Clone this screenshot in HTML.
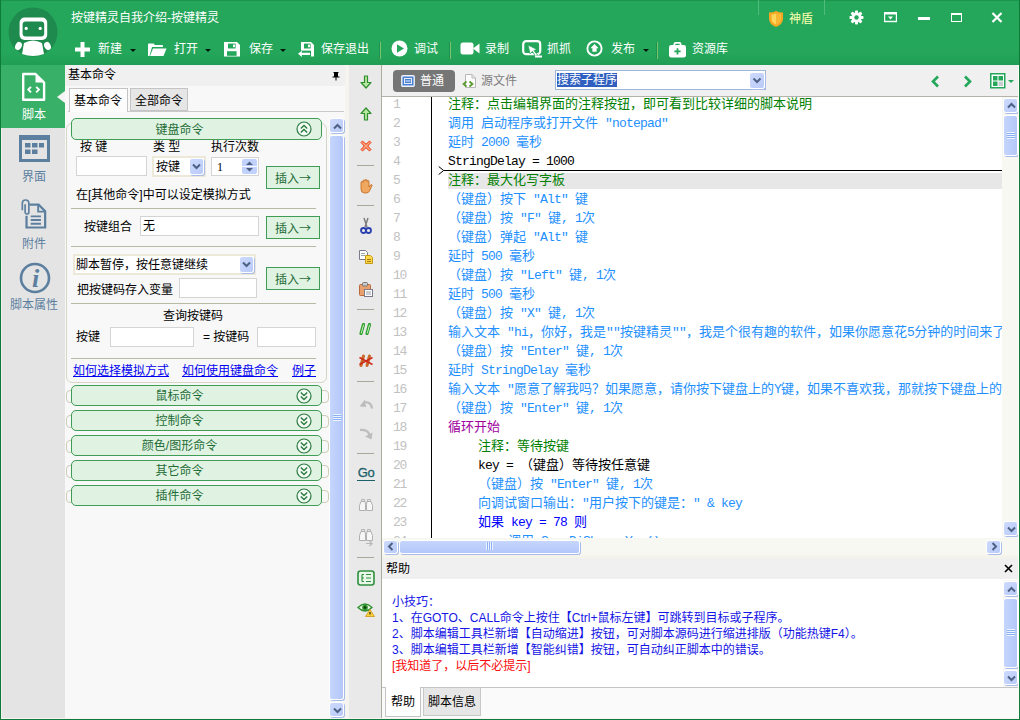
<!DOCTYPE html>
<html lang="zh-CN">
<head>
<meta charset="utf-8">
<title>按键精灵自我介绍-按键精灵</title>
<style>
*{box-sizing:border-box;margin:0;padding:0}
html,body{width:1020px;height:720px;overflow:hidden}
body{position:relative;background:#f8f8f8;font-family:"Liberation Sans","Noto Sans CJK SC",sans-serif;font-size:12px;color:#000;line-height:1}
.a{position:absolute}
i{font-style:normal}
/* header */
#hdr{left:0;top:0;width:1020px;height:65px;background:linear-gradient(#1c9450 0,#1c9450 1px,#24a75b 1px,#24a75b 52px,#209d54 65px)}
#hdr .t{color:#fff;font-size:12px;white-space:nowrap;line-height:16px}
#hdr .tb{top:41px;height:16px;color:#fff;font-size:12px;line-height:16px;white-space:nowrap}
#hdr .dd{width:0;height:0;border-left:3px solid transparent;border-right:3px solid transparent;border-top:3px solid #06180d;top:49px}
#hdr .sep{top:42px;width:1px;height:17px;background:#79c56e;box-shadow:-1px 0 0 #1f9150}
/* sidebar */
#side{left:0;top:65px;width:65px;height:653px;background:#e4e4e4}
#side .act{left:0;top:0;width:65px;height:63px;background:#38b068}
#side .lb{width:66px;text-align:center;font-size:12px;line-height:14px;color:#5c7fa0;left:1px}
/* command panel */
#cmd{left:65px;top:65px;width:284px;height:653px;background:#f8f8f8;z-index:0}
.gh{left:6px;width:251px;height:21px;border:1px solid #3f9c55;border-radius:5px;background:#e0f3e3;color:#1e6b35;text-align:center;line-height:20px;font-size:12px}
.gh span{position:absolute;left:0;width:215px;text-align:center}
.gh:before{content:"";position:absolute;left:-6px;top:4px;width:261px;height:11px;border:1px solid #cdcdb8;border-radius:4px;z-index:-1}
.gh.k:before{display:none}
.inp{background:#fff;border:1px solid #d4d4d4}
.btn{white-space:nowrap;border:1px solid #3f9c55;background:#e0f3e3;color:#1e6b35;text-align:center;font-size:12px;width:54px;height:23px;line-height:21px}
.hr{left:6px;width:245px;height:1px;background:#b9b9a6}
.lbl{white-space:nowrap;line-height:14px;font-size:12px}
.lnk{color:#0000f0;text-decoration:underline;white-space:nowrap;line-height:14px}
/* xp scrollbar */
.sbv{width:16px;background:#f8f8f3}
.sbb{width:15px;height:15px;background:linear-gradient(135deg,#cddafd,#b9caf8);border:1px solid #fff;border-radius:3px;box-shadow:1px 1px 0 #a9bbea}
.thumb{background:linear-gradient(90deg,#c5d5fd,#b4c7f9);border:1px solid #fff;border-radius:3px;box-shadow:1px 1px 0 #a9bbea}
.thumb.h{background:linear-gradient(#c5d5fd,#b4c7f9)}
/* vtoolbar */
#vtb{left:349px;top:65px;width:32px;height:653px;background:#e9e9e9}
#vtb .s{left:8px;width:17px;height:1px;background:#a8a89a}
/* editor */
#ed{left:382px;top:65px;width:636px;height:653px;background:#fff}
#edtop{left:0;top:0;width:636px;height:32px;background:#f0f0f0;border-bottom:1px solid #b4b3a9}
.ln{position:absolute;left:11px;height:19px;line-height:15px;font-family:"Liberation Mono",monospace;font-size:13px;letter-spacing:-1.3px;color:#c2c2c2}
.cl{position:absolute;height:19px;line-height:15px;white-space:nowrap;font-size:13px;font-family:"Liberation Mono","Noto Sans CJK SC",monospace}
.cl i{font-size:13px;letter-spacing:-0.8px}
.cg{color:#008000}.cb{color:#1e90ff}.ck{color:#000}.cp{color:#a000a0}.cd{color:#0000ff}
#help{font-size:12px;line-height:16px;color:#1414e6;white-space:nowrap}
</style>
</head>
<body>
<!-- ================= HEADER ================= -->
<div id="hdr" class="a">
  <svg class="a" style="left:8px;top:7px" width="50" height="50" viewBox="0 0 50 50">
    <circle cx="25" cy="25" r="24.5" fill="#1f8a4d"/>
    <rect x="11.6" y="10.6" width="27.6" height="22.4" rx="5" fill="#fff"/>
    <rect x="14.6" y="14.4" width="21.6" height="15.2" rx="3" fill="#1f8a4d"/>
    <circle cx="18.2" cy="21.4" r="1.6" fill="#fff"/><circle cx="32.2" cy="21.4" r="1.6" fill="#fff"/>
    <path d="M16 36 Q25 31 34 36 L36 47 Q25 51 14 47 Z" fill="#fff"/>
    <ellipse cx="10.5" cy="39" rx="3.2" ry="4.2" fill="#fff" transform="rotate(25 10.5 39)"/>
    <ellipse cx="39.5" cy="39" rx="3.2" ry="4.2" fill="#fff" transform="rotate(-25 39.5 39)"/>
  </svg>
  <div class="a t" style="left:71px;top:10px">按键精灵自我介绍-按键精灵</div>

  <!-- toolbar -->
  <svg class="a" style="left:74px;top:41px" width="17" height="17" viewBox="0 0 17 17"><path d="M6.5 1h4v5.5H16v4h-5.500V16h-4v-5.500H1v-4h5.500z" fill="#fff"/></svg>
  <div class="a tb" style="left:98px">新建</div><div class="a dd" style="left:130px"></div>
  <svg class="a" style="left:147px;top:42px" width="20" height="15" viewBox="0 0 20 15"><path d="M1 14V2.500Q1 1.500 2 1.500h4.500l1.500 1.500h7q1 0 1 1V5H5L2.500 14z" fill="#fff"/><path d="M6 6.500h13.500L16.500 14H3z" fill="#fff"/></svg>
  <div class="a tb" style="left:174px">打开</div><div class="a dd" style="left:205px"></div>
  <svg class="a" style="left:224px;top:41px" width="17" height="17" viewBox="0 0 17 17"><path d="M0 1h13l3 3v11.600H0z" fill="#fff"/><rect x="4" y="2.600" width="7.600" height="4.900" fill="#24a75b"/><rect x="9" y="3.600" width="2" height="2.600" fill="#fff"/><rect x="3" y="10.200" width="9.600" height="4.600" fill="#24a75b"/></svg>
  <div class="a tb" style="left:249px">保存</div><div class="a dd" style="left:280px"></div>
  <svg class="a" style="left:298px;top:41px" width="17" height="17" viewBox="0 0 17 17"><path d="M3 1h10l3 3v11.600H3z" fill="#fff"/><rect x="6" y="2.600" width="6.600" height="4.900" fill="#24a75b"/><rect x="10" y="3.600" width="2" height="2.600" fill="#fff"/><rect x="2" y="9.600" width="11" height="6.500" fill="#24a75b"/><path d="M0 12.800l3.800-3v2h8.200v2.200H3.800v2z" fill="#fff"/></svg>
  <div class="a tb" style="left:321px">保存退出</div>
  <div class="a sep" style="left:380px"></div>
  <svg class="a" style="left:391px;top:40px" width="17" height="17" viewBox="0 0 17 17"><circle cx="8.500" cy="8.500" r="8" fill="#fff"/><path d="M6 4.200L13 8.500 6 12.800z" fill="#24a75b"/></svg>
  <div class="a tb" style="left:414px">调试</div>
  <div class="a sep" style="left:450px"></div>
  <svg class="a" style="left:460px;top:42px" width="20" height="13" viewBox="0 0 20 13"><rect x="0.500" y="0.500" width="13" height="12" rx="2.500" fill="#fff"/><path d="M13 6.500L19.500 1.500v10z" fill="#fff"/></svg>
  <div class="a tb" style="left:485px">录制</div>
  <svg class="a" style="left:522px;top:40px" width="21" height="18" viewBox="0 0 21 18"><rect x="1.200" y="1.200" width="17" height="13" rx="3" fill="none" stroke="#fff" stroke-width="2.200"/><path d="M6 5l9 4.500-3 1 3.500 4.500-2 1.200-3-4.700-2.500 2.300z" fill="#fff" stroke="#24a75b" stroke-width="0.800"/><path d="M13 16.500h7" stroke="#fff" stroke-width="2"/></svg>
  <div class="a tb" style="left:547px">抓抓</div>
  <svg class="a" style="left:586px;top:40px" width="17" height="17" viewBox="0 0 17 17"><circle cx="8.5" cy="8.5" r="7.1" fill="none" stroke="#fff" stroke-width="1.9"/><path d="M8.5 4L12.600 8.200h-2v3.600H6.400V8.200h-2z" fill="#fff"/></svg>
  <div class="a tb" style="left:611px">发布</div><div class="a dd" style="left:643px"></div>
  <div class="a sep" style="left:657px"></div>
  <svg class="a" style="left:668px;top:41px" width="19" height="17" viewBox="0 0 20 19"><path d="M6.500 5V3.500q0-1.500 1.500-1.500h4q1.500 0 1.500 1.500V5" fill="none" stroke="#fff" stroke-width="2"/><rect x="0.500" y="4.500" width="19" height="14" rx="2.500" fill="#fff"/><path d="M9 8h2v2.500h2.500v2H11V15H9v-2.500H6.500v-2H9z" fill="#24a75b"/></svg>
  <div class="a tb" style="left:692px">资源库</div>

  <!-- window controls -->
  <div class="a" style="left:758px;top:0;width:1px;height:15px;background:#4fbb7c"></div>
  <div class="a" style="left:824px;top:0;width:1px;height:15px;background:#4fbb7c"></div>
  <svg class="a" style="left:768px;top:10px" width="16" height="18" viewBox="0 0 16 18"><path d="M8 1Q11 2.500 15 2.500V9q0 5-7 8-7-3-7-8V2.500Q5 2.500 8 1z" fill="#f5a623"/><path d="M8 3.500Q10 4.500 12.500 4.500V9q0 3.500-4.500 5.500Q3.500 12.500 3.500 9V4.500Q6 4.500 8 3.500z" fill="#ffd65c"/><path d="M8 3.500Q10 4.500 12.500 4.500V9q0 3.500-4.500 5.500z" fill="#f7b733"/></svg>
  <div class="a t" style="left:789px;top:11px;color:#ffffb0">神盾</div>
  <svg class="a" style="left:849px;top:10px" width="15" height="15" viewBox="0 0 15 15"><g fill="#fff"><circle cx="7.500" cy="7.500" r="5"/><g id="gt"><rect x="6" y="0.500" width="3" height="14" rx="0.800"/></g><rect x="6" y="0.500" width="3" height="14" rx="0.800" transform="rotate(45 7.500 7.500)"/><rect x="6" y="0.500" width="3" height="14" rx="0.800" transform="rotate(90 7.500 7.500)"/><rect x="6" y="0.500" width="3" height="14" rx="0.800" transform="rotate(135 7.500 7.500)"/></g><circle cx="7.500" cy="7.500" r="2.200" fill="#24a75b"/></svg>
  <svg class="a" style="left:884px;top:12px" width="13" height="11" viewBox="0 0 13 11"><rect x="0.500" y="0.500" width="12" height="9" fill="none" stroke="#fff" stroke-width="1.400"/><rect x="0.500" y="0.500" width="12" height="2" fill="#fff"/><path d="M4 4.500h5L6.500 7.500z" fill="#fff"/></svg>
  <div class="a" style="left:918px;top:17px;width:12px;height:3px;background:#fff"></div>
  <div class="a" style="left:951px;top:13px;width:11px;height:9px;border:1px solid #fff;border-top-width:2px"></div>
  <svg class="a" style="left:991px;top:12px" width="12" height="11" viewBox="0 0 12 11"><path d="M1.500 1l9 9M10.500 1l-9 9" stroke="#fff" stroke-width="2.200"/></svg>
</div>

<!-- ================= SIDEBAR ================= -->
<div id="side" class="a">
  <div class="a act"></div>
  <div class="a" style="left:57px;top:26px;width:0;height:0;border-top:6px solid transparent;border-bottom:6px solid transparent;border-right:8px solid #f4f4f4"></div>
  <svg class="a" style="left:21px;top:7px" width="26" height="30" viewBox="0 0 26 30"><path d="M2.2 2h12.300l8.600 8.600V27.800H2.200z" fill="none" stroke="#fff" stroke-width="2.400" stroke-linejoin="round"/><path d="M14.500 2v8.600h8.600z" fill="#fff"/><path d="M10 14.800L7.300 17.600l2.700 2.800M15.200 14.800l2.700 2.800-2.700 2.800" fill="none" stroke="#fff" stroke-width="1.900"/></svg>
  <div class="a lb" style="top:43px;color:#fff">脚本</div>

  <svg class="a" style="left:19px;top:70px" width="31" height="27" viewBox="0 0 31 27"><rect x="0" y="0" width="31" height="5" fill="#5c7fa0"/><rect x="1.500" y="1.500" width="28" height="24" fill="none" stroke="#5c7fa0" stroke-width="3"/><rect x="6" y="8" width="5.500" height="4.500" fill="#5c7fa0"/><rect x="13" y="8" width="5.500" height="4.500" fill="#5c7fa0"/><rect x="20" y="8" width="5" height="4.500" fill="#5c7fa0"/><rect x="6" y="14.500" width="5.500" height="4.500" fill="#5c7fa0"/><rect x="13" y="14.500" width="5.500" height="4.500" fill="#5c7fa0"/></svg>
  <div class="a lb" style="top:105px">界面</div>

  <svg class="a" style="left:20px;top:133px" width="27" height="32" viewBox="0 0 29 34"><path d="M10 7h10l7 7v17.500H7V19" fill="none" stroke="#5c7fa0" stroke-width="2.400"/><path d="M19.500 7v7.500H27" fill="none" stroke="#5c7fa0" stroke-width="2"/><path d="M11.500 19.500h11M11.500 23.500h11M11.500 27.500h11" stroke="#5c7fa0" stroke-width="2"/><path d="M2.500 13V5.500a3.500 3.500 0 0 1 7 0V15a2 2 0 0 1-4 0V6.500" fill="none" stroke="#5c7fa0" stroke-width="1.800"/></svg>
  <div class="a lb" style="top:172px">附件</div>

  <svg class="a" style="left:19px;top:197px" width="32" height="32" viewBox="0 0 32 32"><circle cx="16" cy="16" r="14" fill="none" stroke="#5c7fa0" stroke-width="2.600"/><text x="16.5" y="24.5" text-anchor="middle" font-family="Liberation Serif,serif" font-style="italic" font-weight="bold" font-size="26" fill="#5c7fa0">i</text></svg>
  <div class="a lb" style="top:233px">脚本属性</div>
</div>

<!-- ================= COMMAND PANEL ================= -->
<div id="cmd" class="a">
  <div class="a" style="left:0;top:0;width:282px;height:21px;background:#f0f0f0"></div>
  <div class="a lbl" style="left:3px;top:3px">基本命令</div>
  <svg class="a" style="left:267px;top:7px" width="8" height="9" viewBox="0 0 8 9"><path d="M1.500 0h5v1h-0.500v3.500h1.500v1H4.500V8.500h-1V5.500H0.500v-1H2V1H1.500z" fill="#000"/><rect x="4" y="1" width="1.500" height="3.500" fill="#000"/></svg>
  <!-- tabs -->
  <div class="a" style="left:3px;top:46px;width:276px;height:1px;background:#c9c9c9"></div>
  <div class="a" style="left:65px;top:23px;width:58px;height:23px;background:#e6e6e6;border:1px solid #c4c4c4"></div>
  <div class="a lbl" style="left:70px;top:29px">全部命令</div>
  <div class="a" style="left:4px;top:23px;width:59px;height:24px;background:#fcfcfc;border:1px solid #c4c4c4;border-bottom:none"></div>
  <div class="a lbl" style="left:9px;top:29px">基本命令</div>

  <!-- keyboard group box -->
  <div class="a" style="left:1px;top:58px;width:261px;height:260px;border:1px solid #d6d6c6;border-radius:6px;background:#f8f8f8"></div>
  <div class="a gh k" style="top:53px;height:22px;line-height:22px"><span>键盘命令</span>
    <svg class="a" style="left:224px;top:2px" width="16" height="16" viewBox="0 0 16 16"><circle cx="8" cy="8" r="7" fill="#f3fbf4" stroke="#2a7a3f" stroke-width="1.200"/><path d="M4.800 7.500L8 4.500l3.200 3M4.800 11.500L8 8.500l3.200 3" fill="none" stroke="#2a7a3f" stroke-width="1.400"/></svg>
  </div>
  <div class="a lbl" style="left:15px;top:75px">按 键</div>
  <div class="a lbl" style="left:88px;top:75px">类 型</div>
  <div class="a lbl" style="left:146px;top:75px">执行次数</div>
  <div class="a inp" style="left:11px;top:91px;width:71px;height:20px"></div>
  <div class="a" style="left:87px;top:91px;width:54px;height:21px;background:#fff;border:2px solid #ece9d8"></div>
  <div class="a lbl" style="left:91px;top:95px">按键</div>
  <div class="a sbb" style="left:124px;top:93px;width:15px;height:17px"></div>
  <svg class="a" style="left:127px;top:98px" width="9" height="7" viewBox="0 0 9 7"><path d="M1 1.500l3.500 3.500L8 1.500" fill="none" stroke="#4d6185" stroke-width="2"/></svg>
  <div class="a inp" style="left:146px;top:92px;width:48px;height:19px"></div>
  <div class="a lbl" style="left:152px;top:95px;font-family:'Liberation Serif',serif">1</div>
  <div class="a" style="left:177px;top:94px;width:15px;height:7px;background:#c0d1fb;border-radius:2px 2px 0 0"></div><div class="a" style="left:177px;top:102px;width:15px;height:7px;background:#c0d1fb;border-radius:0 0 2px 2px"></div>
  <svg class="a" style="left:180px;top:95px" width="9" height="13" viewBox="0 0 9 13"><path d="M1 5l3.500-3.500L8 5zM1 8l3.500 3.500L8 8z" fill="#4d6185"/></svg>
  <div class="a btn" style="left:201px;top:101px">插入<span style="font-family:'Noto Sans CJK SC',sans-serif">→</span></div>
  <div class="a lbl" style="left:11px;top:123px">在[其他命令]中可以设定模拟方式</div>
  <div class="a hr" style="top:143px"></div>
  <div class="a lbl" style="left:19px;top:155px">按键组合</div>
  <div class="a inp" style="left:75px;top:151px;width:119px;height:20px"></div>
  <div class="a lbl" style="left:78px;top:154px">无</div>
  <div class="a btn" style="left:201px;top:151px">插入<span style="font-family:'Noto Sans CJK SC',sans-serif">→</span></div>
  <div class="a hr" style="top:181px"></div>
  <div class="a" style="left:8px;top:189px;width:183px;height:21px;background:#fff;border:2px solid #ece9d8"></div>
  <div class="a lbl" style="left:11px;top:193px">脚本暂停，按任意键继续</div>
  <div class="a sbb" style="left:174px;top:191px;width:15px;height:17px"></div>
  <svg class="a" style="left:177px;top:196px" width="9" height="7" viewBox="0 0 9 7"><path d="M1 1.500l3.500 3.500L8 1.500" fill="none" stroke="#4d6185" stroke-width="2"/></svg>
  <div class="a btn" style="left:201px;top:202px">插入<span style="font-family:'Noto Sans CJK SC',sans-serif">→</span></div>
  <div class="a lbl" style="left:12px;top:218px">把按键码存入变量</div>
  <div class="a inp" style="left:114px;top:213px;width:78px;height:20px"></div>
  <div class="a hr" style="top:238px"></div>
  <div class="a lbl" style="left:98px;top:244px">查询按键码</div>
  <div class="a lbl" style="left:11px;top:265px">按键</div>
  <div class="a inp" style="left:45px;top:262px;width:84px;height:20px"></div>
  <div class="a lbl" style="left:138px;top:265px">= 按键码</div>
  <div class="a inp" style="left:192px;top:262px;width:59px;height:20px"></div>
  <div class="a hr" style="top:293px"></div>
  <div class="a lnk" style="left:8px;top:299px">如何选择模拟方式</div>
  <div class="a lnk" style="left:117px;top:299px">如何使用键盘命令</div>
  <div class="a lnk" style="left:227px;top:299px">例子</div>

  <!-- collapsed groups -->
  <div class="a gh" style="top:320px"><span>鼠标命令</span><svg class="a" style="left:224px;top:2px" width="16" height="16" viewBox="0 0 16 16"><circle cx="8" cy="8" r="7" fill="#f3fbf4" stroke="#2a7a3f" stroke-width="1.200"/><path d="M4.800 4.500L8 7.500l3.200-3M4.800 8.500L8 11.500l3.200-3" fill="none" stroke="#2a7a3f" stroke-width="1.400"/></svg></div>
  <div class="a gh" style="top:345px"><span>控制命令</span><svg class="a" style="left:224px;top:2px" width="16" height="16" viewBox="0 0 16 16"><circle cx="8" cy="8" r="7" fill="#f3fbf4" stroke="#2a7a3f" stroke-width="1.200"/><path d="M4.800 4.500L8 7.500l3.200-3M4.800 8.500L8 11.500l3.200-3" fill="none" stroke="#2a7a3f" stroke-width="1.400"/></svg></div>
  <div class="a gh" style="top:370px"><span>颜色/图形命令</span><svg class="a" style="left:224px;top:2px" width="16" height="16" viewBox="0 0 16 16"><circle cx="8" cy="8" r="7" fill="#f3fbf4" stroke="#2a7a3f" stroke-width="1.200"/><path d="M4.800 4.500L8 7.500l3.200-3M4.800 8.500L8 11.500l3.200-3" fill="none" stroke="#2a7a3f" stroke-width="1.400"/></svg></div>
  <div class="a gh" style="top:395px"><span>其它命令</span><svg class="a" style="left:224px;top:2px" width="16" height="16" viewBox="0 0 16 16"><circle cx="8" cy="8" r="7" fill="#f3fbf4" stroke="#2a7a3f" stroke-width="1.200"/><path d="M4.800 4.500L8 7.500l3.200-3M4.800 8.500L8 11.500l3.200-3" fill="none" stroke="#2a7a3f" stroke-width="1.400"/></svg></div>
  <div class="a gh" style="top:420px"><span>插件命令</span><svg class="a" style="left:224px;top:2px" width="16" height="16" viewBox="0 0 16 16"><circle cx="8" cy="8" r="7" fill="#f3fbf4" stroke="#2a7a3f" stroke-width="1.200"/><path d="M4.800 4.500L8 7.500l3.200-3M4.800 8.500L8 11.500l3.200-3" fill="none" stroke="#2a7a3f" stroke-width="1.400"/></svg></div>

  <!-- scrollbar -->
  <div class="a" style="left:280px;top:0;width:4px;height:653px;background:#f5f4ee"></div>
  <div class="a sbv" style="left:264px;top:53px;height:600px"></div>
  <div class="a sbb" style="left:264px;top:53px"></div>
  <svg class="a" style="left:268px;top:58px" width="9" height="7" viewBox="0 0 9 7"><path d="M1 5.500l3.500-3.500L8 5.500" fill="none" stroke="#4d6185" stroke-width="2"/></svg>
  <div class="a thumb" style="left:264px;top:70px;width:15px;height:565px"></div>
  <div class="a" style="left:268px;top:349px;width:8px;height:7px;background:repeating-linear-gradient(#eef4fe 0 1px,#8cb0f8 1px 2px)"></div>
  <div class="a sbb" style="left:264px;top:637px"></div>
  <svg class="a" style="left:268px;top:642px" width="9" height="7" viewBox="0 0 9 7"><path d="M1 1.500l3.500 3.500L8 1.500" fill="none" stroke="#4d6185" stroke-width="2"/></svg>
</div>

<!-- ================= VERTICAL TOOLBAR ================= -->
<div id="vtb" class="a">
  <svg class="a" style="left:11px;top:10px" width="12" height="14" viewBox="0 0 12 14"><path d="M4.5 1h3v6.500h3.500L6 13 1 7.500h3.500z" fill="#b9e6a0" stroke="#2f8f2f" stroke-width="1.200" stroke-linejoin="round"/></svg>
  <svg class="a" style="left:11px;top:42px" width="12" height="14" viewBox="0 0 12 14"><path d="M4.5 13h3V6.500h3.500L6 1 1 6.500h3.500z" fill="#b9e6a0" stroke="#2f8f2f" stroke-width="1.200" stroke-linejoin="round"/></svg>
  <svg class="a" style="left:10px;top:74px" width="14" height="14" viewBox="0 0 14 14"><path d="M2 3.5L3.5 2 7 5.2 10.5 2 12 3.5 8.8 7 12 10.5 10.5 12 7 8.8 3.5 12 2 10.5 5.2 7z" fill="#f58a62" stroke="#ea4a1c" stroke-width="1"/><path d="M3.500 3.500l7 7M10.500 3.500l-7 7" stroke="#f9b49a" stroke-width="0.800"/></svg>
  <div class="a s" style="top:100px"></div>
  <svg class="a" style="left:9px;top:113px" width="16" height="16" viewBox="0 0 16 16"><path d="M3 8V4.500q0-1 1-1t1 1V3q0-1 1-1t1 1v-0.500q0-1 1-1t1 1V3.500q0-1 1-1t1 1V9l1.500-2q1-1 1.700 0L12 12q-1 3-4 3H6.500Q3 15 3 11z" fill="#f0a860" stroke="#c4702a" stroke-width="0.900"/></svg>
  <div class="a s" style="top:140px"></div>
  <svg class="a" style="left:11px;top:152px" width="12" height="18" viewBox="0 0 12 18"><path d="M4 1l3 9M8 1L5 10" stroke="#7a7a7a" stroke-width="1.400" fill="none"/><circle cx="3.500" cy="13.500" r="2.500" fill="none" stroke="#2a3fb0" stroke-width="1.800"/><circle cx="8.500" cy="13.500" r="2.500" fill="none" stroke="#2a3fb0" stroke-width="1.800"/></svg>
  <svg class="a" style="left:9px;top:184px" width="16" height="16" viewBox="0 0 16 16"><path d="M1.500 1.500h6l2 2v7h-8z" fill="#fff" stroke="#7a7a8a" stroke-width="1"/><path d="M3 4.500h4M3 6.500h4" stroke="#9aa" stroke-width="1"/><path d="M7.500 6.500h5l2 2v6h-7z" fill="#ffd84a" stroke="#c49a1a" stroke-width="1"/><path d="M9 10.500h4M9 12.500h4" stroke="#a07a10" stroke-width="1"/></svg>
  <svg class="a" style="left:9px;top:216px" width="16" height="17" viewBox="0 0 16 17"><rect x="1.500" y="3.500" width="11" height="11" rx="1" fill="#e8a070" stroke="#b8683a" stroke-width="1"/><rect x="4.500" y="1.500" width="5" height="3.500" rx="1" fill="#ccc" stroke="#777" stroke-width="1"/><rect x="6.500" y="8.500" width="8" height="7" fill="#fff" stroke="#7a7a8a" stroke-width="1"/><path d="M8 11h5M8 13h5" stroke="#99a" stroke-width="1"/></svg>
  <div class="a s" style="top:244px"></div>
  <svg class="a" style="left:10px;top:258px" width="14" height="12" viewBox="0 0 14 12"><path d="M4.500 1.500L2 10.500M10.500 1.500L8 10.500" stroke="#2f9f2f" stroke-width="3.200" stroke-linecap="round"/><path d="M4.500 2L2.300 10M10.500 2L8.300 10" stroke="#d8f5c8" stroke-width="0.900" stroke-linecap="round"/></svg>
  <svg class="a" style="left:9px;top:289px" width="16" height="14" viewBox="0 0 16 14"><path d="M5.500 2L3 11.500M11.500 2L9 11.500" stroke="#c86a2a" stroke-width="3" stroke-linecap="round"/><path d="M1.500 3.500l13 7M14.500 3.500l-13 7" stroke="#d02a1a" stroke-width="1.600"/></svg>
  <div class="a s" style="top:316px"></div>
  <svg class="a" style="left:9px;top:332px" width="16" height="12" viewBox="0 0 16 12"><path d="M14 11.500Q13 4 5.500 5.500" fill="none" stroke="#bdbdbd" stroke-width="2.200"/><path d="M1.500 9.500L7 2.500l1 7.500z" fill="#bdbdbd"/></svg>
  <svg class="a" style="left:9px;top:363px" width="16" height="12" viewBox="0 0 16 12"><path d="M2 2Q10 1.500 11.500 7" fill="none" stroke="#bdbdbd" stroke-width="2.200"/><path d="M14.500 4.500L13.500 11.500 7 8.500z" fill="#bdbdbd"/></svg>
  <div class="a s" style="top:388px"></div>
  <div class="a" style="left:8px;top:401px;width:18px;text-align:center;font:13px 'Liberation Sans',sans-serif;color:#1d5f6a;line-height:13px;border-bottom:1px solid #1d5f6a;height:15px;letter-spacing:-0.300px;-webkit-text-stroke:0.300px #1d5f6a">Go</div>
  <svg class="a" style="left:9px;top:433px" width="16" height="14" viewBox="0 0 16 14"><path d="M3.500 1.500h3v2h-3zM9.500 1.500h3v2h-3z" fill="#e4e4e4" stroke="#b8b8b8" stroke-width="1"/><path d="M3 3.500h4l0.500 3v6h-6v-5zM13 3.500H9l-0.500 3v6h6v-5z" fill="#f6f6f6" stroke="#b0b0b0" stroke-width="1"/><path d="M7.500 6.500h1" stroke="#b0b0b0" stroke-width="1"/></svg>
  <svg class="a" style="left:9px;top:463px" width="16" height="14" viewBox="0 0 16 14"><path d="M3.500 1.500h3v2h-3zM9.500 1.500h3v2h-3z" fill="#e4e4e4" stroke="#b8b8b8" stroke-width="1"/><path d="M3 3.500h4l0.500 3v6h-6v-5zM13 3.500H9l-0.500 3v6h6v-5z" fill="#f6f6f6" stroke="#b0b0b0" stroke-width="1"/><path d="M7.500 6.500h1" stroke="#b0b0b0" stroke-width="1"/></svg>
  <svg class="a" style="left:11px;top:475px" width="16" height="8" viewBox="0 0 16 8"><path d="M6 3.500h5.500M9.500 1l2.500 2.500L9.500 6" fill="none" stroke="#b8b8b8" stroke-width="1.200"/></svg>
  <div class="a s" style="top:492px"></div>
  <svg class="a" style="left:8px;top:505px" width="18" height="16" viewBox="0 0 18 16"><rect x="1" y="1" width="16" height="14" rx="2.500" fill="#e9f7e9" stroke="#2f8f3f" stroke-width="1.600"/><path d="M5 4.500v7M5 4.500h2M5 8h2M5 11.500h2M9 4.500h5M9 8h5M9 11.500h5" stroke="#2f8f3f" stroke-width="1.200" fill="none"/></svg>
  <svg class="a" style="left:8px;top:536px" width="18" height="16" viewBox="0 0 18 16"><path d="M1 6.500Q8 -0.500 15 6.500Q8 13.500 1 6.500z" fill="#e8f8e0" stroke="#2f8f2f" stroke-width="1.300"/><circle cx="8" cy="6.500" r="2.800" fill="#2f8f2f"/><circle cx="8" cy="6.500" r="1.200" fill="#0a3a0a"/><path d="M13 8.500l4.500 7h-9z" fill="#ffd23a" stroke="#c8961a" stroke-width="0.800"/><path d="M13 11v2.500" stroke="#222" stroke-width="1.200"/></svg>
</div>

<!-- ================= EDITOR ================= -->
<div id="ed" class="a">
  <div id="edtop" class="a"></div>
  
  <div class="a" style="left:11px;top:5px;width:62px;height:22px;background:#767676;border-radius:4px"></div>
  <svg class="a" style="left:19px;top:10px" width="14" height="12" viewBox="0 0 14 12"><rect x="0.8" y="0.8" width="12.4" height="10.4" rx="1" fill="#4a7fd0" stroke="#eef3fd" stroke-width="1.4"/><rect x="3.5" y="3.5" width="7" height="5" fill="none" stroke="#e6eefc" stroke-width="1"/><path d="M4.500 6h5" stroke="#e6eefc" stroke-width="1"/></svg>
  <div class="a" style="left:38px;top:9px;color:#fff;font-size:12px;line-height:15px;white-space:nowrap">普通</div>
  <svg class="a" style="left:80px;top:8px" width="15" height="16" viewBox="0 0 15 16"><path d="M3.500 1.500h6.500l3.500 3.500v9.500h-10z" fill="#fbfbfb" stroke="#b8b8b8" stroke-width="1"/><path d="M10 1.500v3.500h3.500" fill="none" stroke="#b8b8b8" stroke-width="1"/><path d="M4.500 8.500L1.500 11l3 2.500M7.500 8.500l3 2.500-3 2.500" fill="none" stroke="#5a9a28" stroke-width="1.700"/></svg>
  <div class="a" style="left:99px;top:9px;color:#7d7d7d;font-size:12px;line-height:15px;white-space:nowrap">源文件</div>
  <div class="a" style="left:173px;top:5px;width:211px;height:20px;background:#fff;border:1px solid #9eb6d8"></div>
  <div class="a" style="left:175px;top:8px;height:14px;background:#2f5fbf;color:#fff;font-size:12px;line-height:14px;white-space:nowrap">搜索子程序</div>
  <div class="a sbb" style="left:367px;top:7px;width:16px;height:17px"></div>
  <svg class="a" style="left:370px;top:12px" width="10" height="7" viewBox="0 0 10 7"><path d="M1.500 1.500L5 5l3.500-3.500" fill="none" stroke="#4d6185" stroke-width="2"/></svg>
  <svg class="a" style="left:548px;top:10px" width="10" height="13" viewBox="0 0 10 13"><path d="M8 1.500L3 6.500l5 5" fill="none" stroke="#24a75b" stroke-width="2.600"/></svg>
  <svg class="a" style="left:581px;top:10px" width="10" height="13" viewBox="0 0 10 13"><path d="M2 1.500l5 5-5 5" fill="none" stroke="#24a75b" stroke-width="2.600"/></svg>
  <svg class="a" style="left:608px;top:8px" width="26" height="16" viewBox="0 0 26 16"><rect x="0.750" y="0.750" width="14" height="14" fill="#fff" stroke="#24a75b" stroke-width="1.500"/><rect x="3" y="3" width="4.500" height="4.500" fill="#24a75b"/><rect x="8.500" y="3" width="4.500" height="4.500" fill="#24a75b"/><rect x="3" y="8.500" width="4.500" height="4.500" fill="#24a75b"/><rect x="8.500" y="8.500" width="4.500" height="4.500" fill="#c8ccd0"/><path d="M18 7h6l-3 3z" fill="#24a75b"/></svg>

  <div class="a" style="left:49px;top:32px;width:1px;height:441px;background:#000"></div>
  <div class="a" style="left:-1px;top:0;width:1px;height:653px;background:#aeac9f"></div>
  <div class="a" style="left:66px;top:108px;width:554px;height:16px;background:#e7e7e7"></div>
  <div class="a" style="left:62px;top:105px;width:558px;height:1px;background:#000"></div>
  <svg class="a" style="left:56px;top:101px" width="7" height="10" viewBox="0 0 7 10"><path d="M0.700 0.500L5.700 4.500 0.700 8.500" fill="none" stroke="#000" stroke-width="1"/></svg>
  <div id="code" class="a" style="left:0;top:-65px;width:620px;height:538px;overflow:hidden">
<div class="ln" style="top:97px">1</div>
<div class="cl cg" style="top:97px;left:66px">注释：点击编辑界面的注释按钮，即可看到比较详细的脚本说明</div>
<div class="ln" style="top:116px">2</div>
<div class="cl cb" style="top:116px;left:66px">调用<i>&nbsp;</i>启动程序或打开文件<i>&nbsp;"notepad"</i></div>
<div class="ln" style="top:135px">3</div>
<div class="cl cb" style="top:135px;left:66px">延时<i>&nbsp;2000&nbsp;</i>毫秒</div>
<div class="ln" style="top:154px">4</div>
<div class="cl ck" style="top:154px;left:66px"><i>StringDelay&nbsp;=&nbsp;1000</i></div>
<div class="ln" style="top:173px">5</div>
<div class="cl cg hl" style="top:173px;left:66px">注释：最大化写字板</div>
<div class="ln" style="top:192px">6</div>
<div class="cl cb" style="top:192px;left:66px">（键盘）按下<i>&nbsp;"Alt"&nbsp;</i>键</div>
<div class="ln" style="top:211px">7</div>
<div class="cl cb" style="top:211px;left:66px">（键盘）按<i>&nbsp;"F"&nbsp;</i>键<i>,&nbsp;1</i>次</div>
<div class="ln" style="top:230px">8</div>
<div class="cl cb" style="top:230px;left:66px">（键盘）弹起<i>&nbsp;"Alt"&nbsp;</i>键</div>
<div class="ln" style="top:249px">9</div>
<div class="cl cb" style="top:249px;left:66px">延时<i>&nbsp;500&nbsp;</i>毫秒</div>
<div class="ln" style="top:268px">10</div>
<div class="cl cb" style="top:268px;left:66px">（键盘）按<i>&nbsp;"Left"&nbsp;</i>键<i>,&nbsp;1</i>次</div>
<div class="ln" style="top:287px">11</div>
<div class="cl cb" style="top:287px;left:66px">延时<i>&nbsp;500&nbsp;</i>毫秒</div>
<div class="ln" style="top:306px">12</div>
<div class="cl cb" style="top:306px;left:66px">（键盘）按<i>&nbsp;"X"&nbsp;</i>键<i>,&nbsp;1</i>次</div>
<div class="ln" style="top:325px">13</div>
<div class="cl cb" style="top:325px;left:66px">输入文本<i>&nbsp;"hi</i>，你好，我是<i>""</i>按键精灵<i>""</i>，我是个很有趣的软件，如果你愿意花<i>5</i>分钟的时间来了解我</div>
<div class="ln" style="top:344px">14</div>
<div class="cl cb" style="top:344px;left:66px">（键盘）按<i>&nbsp;"Enter"&nbsp;</i>键<i>,&nbsp;1</i>次</div>
<div class="ln" style="top:363px">15</div>
<div class="cl cb" style="top:363px;left:66px">延时<i>&nbsp;StringDelay&nbsp;</i>毫秒</div>
<div class="ln" style="top:382px">16</div>
<div class="cl cb" style="top:382px;left:66px">输入文本<i>&nbsp;"</i>愿意了解我吗？如果愿意，请你按下键盘上的<i>Y</i>键，如果不喜欢我，那就按下键盘上的<i>N</i>键</div>
<div class="ln" style="top:401px">17</div>
<div class="cl cb" style="top:401px;left:66px">（键盘）按<i>&nbsp;"Enter"&nbsp;</i>键<i>,&nbsp;1</i>次</div>
<div class="ln" style="top:420px">18</div>
<div class="cl cp" style="top:420px;left:66px">循环开始</div>
<div class="ln" style="top:439px">19</div>
<div class="cl cg" style="top:439px;left:96px">注释：等待按键</div>
<div class="ln" style="top:458px">20</div>
<div class="cl ck" style="top:458px;left:96px"><i>key&nbsp;=&nbsp;</i>（键盘）等待按任意键</div>
<div class="ln" style="top:477px">21</div>
<div class="cl cb" style="top:477px;left:96px">（键盘）按<i>&nbsp;"Enter"&nbsp;</i>键<i>,&nbsp;1</i>次</div>
<div class="ln" style="top:496px">22</div>
<div class="cl cb" style="top:496px;left:96px">向调试窗口输出：<i>"</i>用户按下的键是：<i>"&nbsp;&amp;&nbsp;key</i></div>
<div class="ln" style="top:515px">23</div>
<div class="cl cd" style="top:515px;left:96px">如果<i>&nbsp;key&nbsp;=&nbsp;78&nbsp;</i>则</div>
<div class="ln" style="top:534px">24</div>
<div class="cl cb" style="top:534px;left:126px">调用<i>&nbsp;Say_DiShang_You()</i></div>
  </div>
  
  <!-- editor v-scrollbar -->
  <div class="a sbv" style="left:620px;top:32px;width:18px;height:441px"></div>
  <div class="a sbb" style="left:621px;top:33px;height:15px"></div>
  <svg class="a" style="left:625px;top:37px" width="9" height="7" viewBox="0 0 9 7"><path d="M1 5.500l3.500-3.500L8 5.500" fill="none" stroke="#4d6185" stroke-width="2"/></svg>
  <div class="a thumb" style="left:621px;top:50px;width:15px;height:41px"></div>
  <div class="a" style="left:625px;top:67px;width:8px;height:7px;background:repeating-linear-gradient(#eef4fe 0 1px,#8cb0f8 1px 2px)"></div>
  <div class="a sbb" style="left:621px;top:456px"></div>
  <svg class="a" style="left:625px;top:461px" width="9" height="7" viewBox="0 0 9 7"><path d="M1 1.500l3.500 3.500L8 1.500" fill="none" stroke="#4d6185" stroke-width="2"/></svg>
  <!-- editor h-scrollbar -->
  <div class="a" style="left:0;top:473px;width:636px;height:17px;background:#f8f8f3"></div>
  <div class="a sbb" style="left:1px;top:475px;width:15px;height:14px"></div>
  <svg class="a" style="left:5px;top:477px" width="7" height="9" viewBox="0 0 7 9"><path d="M5.500 1L2 4.500 5.500 8" fill="none" stroke="#4d6185" stroke-width="2"/></svg>
  <div class="a thumb h" style="left:17px;top:475px;width:181px;height:14px"></div>
  <div class="a" style="left:104px;top:477px;width:7px;height:8px;background:repeating-linear-gradient(90deg,#eef4fe 0 1px,#8cb0f8 1px 2px)"></div>
  <div class="a sbb" style="left:604px;top:475px;height:14px"></div>
  <svg class="a" style="left:609px;top:477px" width="7" height="9" viewBox="0 0 7 9"><path d="M1.500 1L5 4.500 1.500 8" fill="none" stroke="#4d6185" stroke-width="2"/></svg>
  <!-- help panel -->
  <div class="a" style="left:0;top:490px;width:636px;height:163px;background:#fafafa"></div>
  <div class="a" style="left:0;top:490px;width:636px;height:3px;background:#f5f4ea"></div>
  <div class="a" style="left:0;top:493px;width:636px;height:21px;background:#f0f0f0"></div>
  <div class="a lbl" style="left:4px;top:497px">帮助</div>
  <svg class="a" style="left:622px;top:499px" width="9" height="9" viewBox="0 0 9 9"><path d="M1 1l7 7M8 1L1 8" stroke="#000" stroke-width="1.600"/></svg>
  <div class="a" style="left:0;top:514px;width:636px;height:109px;background:#fff;border-bottom:1px solid #c4c4c4"></div>
  <div id="help" class="a" style="left:10px;top:529px">小技巧：<br>1、在GOTO、CALL命令上按住【Ctrl+鼠标左键】可跳转到目标或子程序。<br>2、脚本编辑工具栏新增【自动缩进】按钮，可对脚本源码进行缩进排版（功能热键F4）。<br>3、脚本编辑工具栏新增【智能纠错】按钮，可自动纠正脚本中的错误。<br><span style="color:#fa0a0a">[我知道了，以后不必提示]</span></div>
  <div class="a sbv" style="left:621px;top:515px;height:107px"></div>
  <div class="a sbb" style="left:621px;top:516px"></div>
  <svg class="a" style="left:625px;top:521px" width="9" height="7" viewBox="0 0 9 7"><path d="M1 5.500l3.500-3.500L8 5.500" fill="none" stroke="#4d6185" stroke-width="2"/></svg>
  <div class="a thumb" style="left:621px;top:533px;width:15px;height:70px"></div>
  <div class="a" style="left:625px;top:564px;width:8px;height:7px;background:repeating-linear-gradient(#eef4fe 0 1px,#8cb0f8 1px 2px)"></div>
  <div class="a sbb" style="left:621px;top:605px"></div>
  <svg class="a" style="left:625px;top:610px" width="9" height="7" viewBox="0 0 9 7"><path d="M1 1.500l3.500 3.500L8 1.500" fill="none" stroke="#4d6185" stroke-width="2"/></svg>
  <!-- bottom tabs -->
  <div class="a" style="left:41px;top:623px;width:58px;height:28px;background:#e6e6e6;border:1px solid #c8c8c8;border-top:none"></div>
  <div class="a lbl" style="left:46px;top:630px">脚本信息</div>
  <div class="a" style="left:3px;top:622px;width:36px;height:30px;background:#fff;border:1px solid #c4c4c4;border-top:none"></div>
  <div class="a lbl" style="left:9px;top:630px">帮助</div>

</div>

<!-- window borders -->
<div class="a" style="left:0;top:718px;width:1020px;height:1px;background:#f8f4f6"></div>
<div class="a" style="left:1px;top:128px;width:1px;height:591px;background:#f4eef0"></div>
<div class="a" style="left:1018px;top:65px;width:1px;height:654px;background:#fcfcfc"></div>
<div class="a" style="left:0;top:0;width:1px;height:720px;background:#0d7c39"></div>
<div class="a" style="left:1019px;top:0;width:1px;height:720px;background:#0d7c39"></div>
<div class="a" style="left:0;top:719px;width:1020px;height:1px;background:#0d7c39"></div>
</body>
</html>
